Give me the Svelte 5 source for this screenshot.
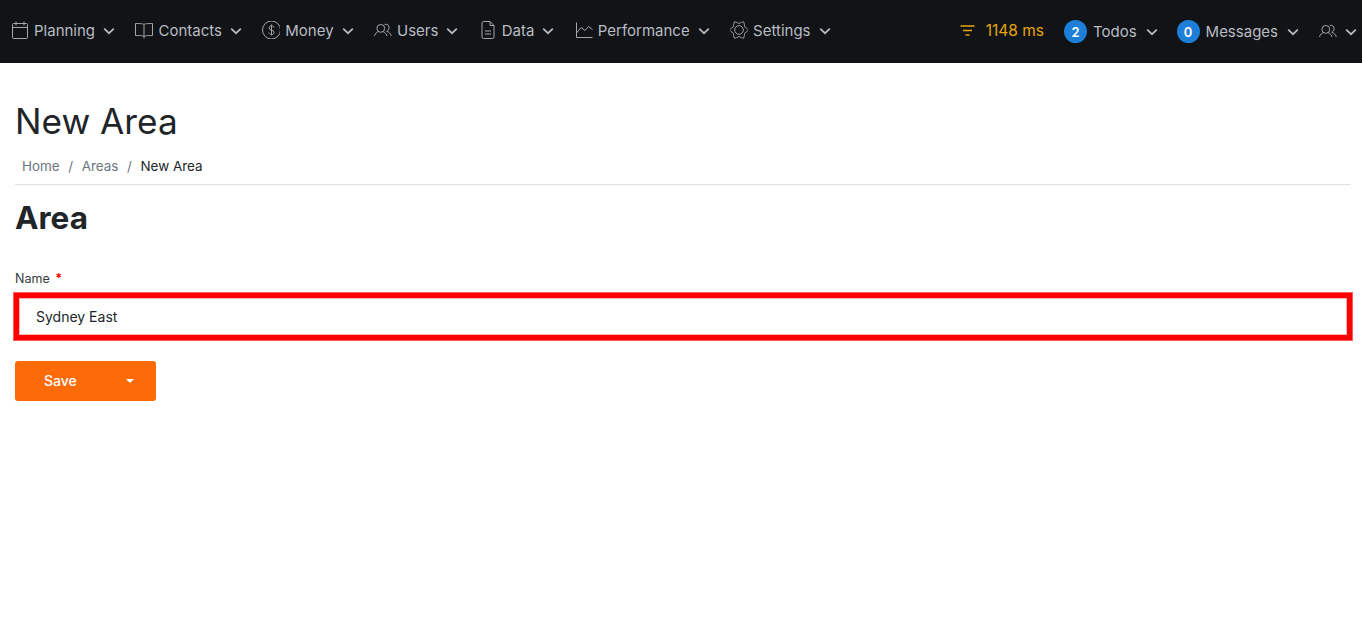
<script>
    const menus = [
        { label: 'Planning', icon: 'calendar' },
        { label: 'Contacts', icon: 'book' },
        { label: 'Money', icon: 'dollar' },
        { label: 'Users', icon: 'users' },
        { label: 'Data', icon: 'file' },
        { label: 'Performance', icon: 'chart' },
        { label: 'Settings', icon: 'gear' }
    ];
</script>

{#snippet chevron()}
    <svg class="chevron" viewBox="0 0 12 8" width="12" height="8" aria-hidden="true">
        <path d="M1.2 1.6 6 6.2l4.8-4.6" fill="none" stroke="currentColor" stroke-width="1.7" />
    </svg>
{/snippet}

{#snippet usersIcon()}
    <svg class="icon" viewBox="0 0 18 18" width="18" height="18" fill="none" stroke="currentColor" stroke-width="1" aria-hidden="true">
        <circle cx="6.8" cy="7.4" r="3.9" />
        <path d="M0.5 15c.6-2.600 2.600-4 4-4.300M13 15c-.6-2.600-2.600-4-4-4.300" />
        <path d="M10.600 3.400c2.700-.7 4.500 1 4.500 3.300 0 1.600-1 3-2.400 3.600 2.200.5 4 2.200 4.600 4.700" />
    </svg>
{/snippet}

{#snippet icon(name)}
    {#if name === 'calendar'}
        <svg class="icon" viewBox="0 0 18 18" width="18" height="18" fill="none" stroke="currentColor" stroke-width="1" aria-hidden="true">
            <rect x="1.500" y="2.500" width="15" height="15" rx="1" />
            <path d="M1.500 6.500h15M5 0.500v4M13 0.500v4" />
        </svg>
    {:else if name === 'book'}
        <svg class="icon" viewBox="0 0 18 18" width="18" height="18" fill="none" stroke="currentColor" stroke-width="1" aria-hidden="true">
            <path d="M9 3.500C8 2.700 6.500 2.500 0.500 2.500v12c6 0 7.500.2 8.500 1.200 1-1 2.500-1.200 8.500-1.200v-12C11.500 2.500 10 2.700 9 3.500zM9 3.500v14" />
        </svg>
    {:else if name === 'dollar'}
        <svg class="icon" viewBox="0 0 18 18" width="18" height="18" fill="none" stroke="currentColor" stroke-width="1" aria-hidden="true">
            <circle cx="9.500" cy="9" r="9" />
            <path d="M12 6.700c0-1.100-1.100-1.900-2.500-1.900S7 5.600 7 6.900c0 2.800 5.100 1.600 5.100 4.500 0 1.300-1.200 2.100-2.600 2.100s-2.600-.8-2.600-2M9.500 3.500v11" />
        </svg>
    {:else if name === 'users'}
        {@render usersIcon()}
    {:else if name === 'file'}
        <svg class="icon" viewBox="0 0 18 18" width="18" height="18" fill="none" stroke="currentColor" stroke-width="1" aria-hidden="true">
            <path d="M11 .5H4.500A1.500 1.500 0 0 0 3 2v14a1.500 1.500 0 0 0 1.500 1.500h9A1.500 1.500 0 0 0 15 16V4.500zM11 .5v4h4M6 10h6M6 13h6" />
        </svg>
    {:else if name === 'chart'}
        <svg class="icon" viewBox="0 0 18 18" width="18" height="18" fill="none" stroke="currentColor" stroke-width="1" aria-hidden="true">
            <path d="M1.500 1.500v15h16M1.500 12l4.500-5.500 4 3 3.500-4 4 3" />
        </svg>
    {:else}
        <svg class="icon" viewBox="0 0 18 18" width="18" height="18" fill="none" stroke="currentColor" stroke-width="1" aria-hidden="true">
            <circle cx="9" cy="9" r="4.300" />
            <path d="M9 1.800Q12 -.1 14.250 -.1Q15 2.500 15.240 5.400Q18 7 19.500 9Q18 11 15.240 12.600Q15 15.500 14.250 18.100Q12 18.100 9 16.200Q6 18.100 3.750 18.100Q3 15.500 2.760 12.600Q0 11 -1.500 9Q0 7 2.760 5.400Q3 2.500 3.750 -.1Q6 -.1 9 1.800z" transform="translate(.9 .9) scale(.9)" stroke-linejoin="round" />
        </svg>
    {/if}
{/snippet}

<nav class="topbar">
    <ul class="menu">
        {#each menus as menu}
            <li class="menu-item">
                {@render icon(menu.icon)}
                <span>{menu.label}</span>
                {@render chevron()}
            </li>
        {/each}
    </ul>
    <div class="status">
        <div class="timing">
            <svg viewBox="0 0 15 11" width="15" height="11" fill="none" stroke="currentColor" stroke-width="1.300" aria-hidden="true">
                <path d="M0.500 1h14M3 5.500h9M5.500 10h4" />
            </svg>
            <span>1148 ms</span>
        </div>
        <div class="menu-item with-badge">
            <span class="badge">2</span>
            <span>Todos</span>
            {@render chevron()}
        </div>
        <div class="menu-item with-badge">
            <span class="badge">0</span>
            <span>Messages</span>
            {@render chevron()}
        </div>
        <div class="menu-item user">
            {@render usersIcon()}
            {@render chevron()}
        </div>
    </div>
</nav>

<main class="content">
    <h1>New Area</h1>
    <ol class="breadcrumb">
        <li>Home</li>
        <li class="sep">/</li>
        <li>Areas</li>
        <li class="sep">/</li>
        <li class="current">New Area</li>
    </ol>
    <h2>Area</h2>
    <label class="field-label" for="name">Name <span class="required">*</span></label>
    <input id="name" class="field-input" type="text" value="Sydney East" />
    <div class="save">
        <button type="button">Save</button>
        <span class="caret"></span>
    </div>
</main>

<style>
    :global(body) {
        margin: 0;
        background: #fff;
        font-family: Inter, "Liberation Sans", sans-serif;
        color: #212529;
    }

    .topbar {
        display: flex;
        justify-content: space-between;
        align-items: center;
        height: 63px;
        padding-left: 11px;
        background: #111316;
        color: #b7bcc3;
        overflow: hidden;
        font-size: 15px;
    }

    .menu {
        display: flex;
        gap: 20.400px;
        margin: 0 0 2px;
        padding: 0;
        list-style: none;
    }

    .menu-item {
        display: flex;
        align-items: center;
        gap: 5px;
    }

    .icon {
        color: #a3a7ac;
        margin-bottom: 1px;
    }

    .chevron {
        margin-left: 3px;
    }

    .status {
        display: flex;
        align-items: center;
        flex-shrink: 0;
        gap: 19px;
        padding-right: 5px;
    }

    .timing {
        display: flex;
        align-items: center;
        gap: 11px;
        margin: 0 1px 3px 0;
        color: #e5a50f;
        font-size: 15.500px;
    }

    .with-badge {
        gap: 6px;
    }

    .user {
        margin-left: 1px;
    }

    .badge {
        display: flex;
        align-items: center;
        justify-content: center;
        width: 23px;
        height: 23px;
        border-radius: 50%;
        background: #1c7ed6;
        color: #fff;
        font-size: 13px;
        font-weight: 600;
    }

    .content {
        padding: 0 11px 0 15px;
    }

    h1 {
        margin: 0;
        padding-top: 36px;
        font-size: 35.200px;
        font-weight: 400;
        line-height: 44px;
    }

    .breadcrumb {
        display: flex;
        gap: 8.700px;
        margin: 0;
        padding: 15px 7px 9px;
        border-bottom: 1px solid #dee2e6;
        list-style: none;
        font-size: 13.400px;
        line-height: 17px;
        color: #6c757d;
    }

    .current {
        color: #212529;
    }

    h2 {
        margin: 0;
        padding-top: 14px;
        font-size: 31.500px;
        font-weight: 700;
        line-height: 38px;
    }

    .field-label {
        display: block;
        margin-top: 34px;
        font-size: 12.500px;
        line-height: 15px;
        color: #343a40;
    }

    .required {
        margin-left: 2px;
        color: #f00;
        font-weight: 700;
    }

    .field-input {
        display: block;
        box-sizing: border-box;
        width: calc(100% + 2px);
        height: 47px;
        margin: 7px 0 0 -1px;
        padding: 0 17px;
        border: 5px solid #f00;
        outline: none;
        background: #fff;
        box-shadow: 0 0 0 1px #ff5c5c, inset 0 0 0 1px #ffb3b3;
        font: 14px Inter, "Liberation Sans", sans-serif;
        color: #212529;
    }

    .save {
        display: flex;
        align-items: center;
        justify-content: space-between;
        box-sizing: border-box;
        width: 141px;
        height: 40px;
        margin-top: 21px;
        padding: 0 22px 0 29px;
        border-radius: 3px;
        background: #fd6b09;
    }

    .save button {
        padding: 0 0 1px;
        border: none;
        background: none;
        color: #fff;
        font: 500 14px Inter, "Liberation Sans", sans-serif;
    }

    .caret {
        width: 0;
        height: 0;
        border-top: 4px solid #fff;
        border-left: 4px solid transparent;
        border-right: 4px solid transparent;
    }
</style>
